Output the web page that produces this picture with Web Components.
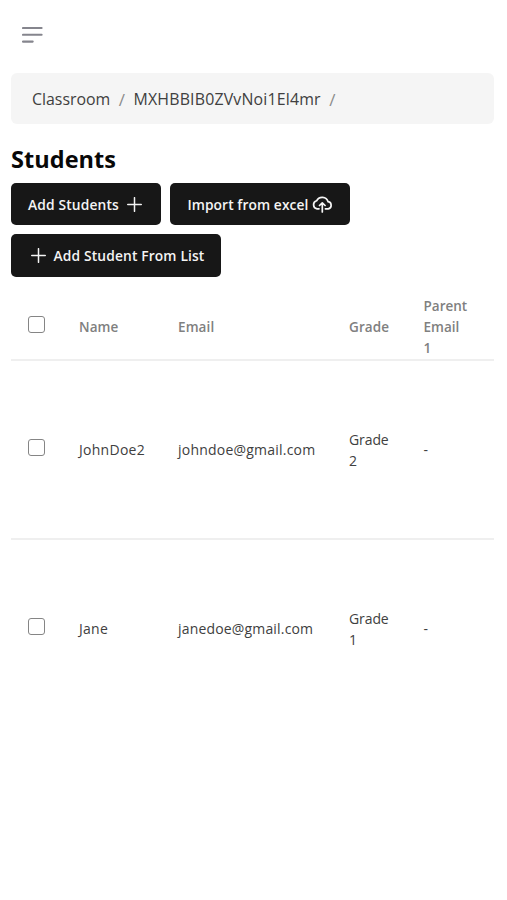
<!DOCTYPE html>
<html lang="en">
<head>
<meta charset="utf-8">
<title>Students</title>
<style>
  html, body { margin: 0; background: #fff; }
  body { font-family: "Open Sans", "Noto Sans", sans-serif; }
</style>
</head>
<body>
<students-page></students-page>
<script>
const define = (name, html) => {
  const template = document.createElement('template');
  template.innerHTML = html;
  customElements.define(name, class extends HTMLElement {
    constructor() {
      super();
      this.attachShadow({ mode: 'open' }).append(template.content.cloneNode(true));
    }
  });
};

define('menu-button', `
  <style>
    :host { display: block; height: 73px; box-sizing: border-box; padding: 26px 0 0 22px; }
    svg { display: block; }
  </style>
  <svg width="21" height="18" viewBox="0 0 21 18" fill="none" stroke="#85858d" stroke-width="2.1" stroke-linecap="round">
    <path d="M1 2H19.6M1 8.8H19.6M1 15.6H10.7"/>
  </svg>`);

define('bread-crumbs', `
  <style>
    :host { display: flex; align-items: center; box-sizing: border-box; height: 51px; margin: 0 13px 0 11px;
      padding: 1px 21px 0; gap: 8.1px; background: #f5f5f5; border-radius: 6px; color: #404040; font-size: 15.9px; white-space: nowrap; }
  </style>
  <slot></slot>`);

define('crumb-item', `
  <style>:host { display: block; letter-spacing: var(--track, 0); }</style>
  <slot></slot>`);

define('crumb-divider', `
  <style>:host { display: block; width: 7px; color: #8c8c8c; font-size: 17px; text-align: center; }</style>
  <span>/</span>`);

define('page-title', `
  <style>
    :host { display: block; margin: 18px 0 0 11px; height: 37px; line-height: 34px; font-size: 23.5px; font-weight: 700;
      color: #080808; letter-spacing: var(--track, .05px); white-space: nowrap; }
  </style>
  <slot></slot>`);

define('button-group', `
  <style>:host { display: flex; flex-wrap: wrap; gap: 9px; margin: 4px 100px 0 11px; }</style>
  <slot></slot>`);

define('action-button', `
  <style>
    :host { display: flex; align-items: center; box-sizing: border-box; width: var(--w); height: 42.3px; padding: 0 17px;
      border-radius: 5px; background: #171717; color: #f4f4f4; font-size: 13.8px; font-weight: 600;
      white-space: nowrap; letter-spacing: var(--track, .14px); }
    .text { width: var(--tw); }
  </style>
  <slot name="before"></slot><span class="text"><slot></slot></span><slot name="after"></slot>`);

define('plus-icon', `
  <style>:host { display: block; } svg { display: block; }</style>
  <svg width="15" height="15" viewBox="0 0 15 15" fill="none" stroke="#f4f4f4" stroke-width="1.5" stroke-linecap="round">
    <path d="M7.5 .7V14.3M.7 7.5H14.3"/>
  </svg>`);

define('cloud-icon', `
  <style>:host { display: block; } svg { display: block; }</style>
  <svg width="21" height="17" viewBox="0 0 21 17" fill="none" stroke="#f4f4f4" stroke-width="1.7" stroke-linecap="round" stroke-linejoin="round">
    <path d="M7 12.8H5A4.1 4.1 0 0 1 4.6 4.8A6.2 6.2 0 0 1 16.1 5.7A3.6 3.6 0 0 1 16.2 12.8H13.4"/>
    <path d="M10.3 15.9V7M7.5 9.5L10.3 6.8L13.1 9.5"/>
  </svg>`);

define('data-table', `
  <style>:host { display: block; margin: 12.9px 13px 0 11px; font-size: 14px; line-height: 21px; }</style>
  <slot></slot>`);

define('table-row', `
  <style>
    :host { display: grid; grid-template-columns: 68px 99px 171px 74.5px 1fr; align-items: center; box-sizing: border-box;
      height: var(--h, 179px); color: #404040; border-bottom: 2px solid var(--line, #efefef); }
    :host([head]) { --h: 72px; --box-gap: 5.5px; padding-top: 6px; color: #808080; font-size: 13.5px; font-weight: 600; }
    :host([last]) { --line: transparent; }
  </style>
  <slot></slot>`);

define('table-cell', `
  <style>:host { display: block; letter-spacing: var(--track, .1px); }</style>
  <slot></slot>`);

define('check-box', `
  <style>
    :host { display: block; padding: 0 0 var(--box-gap, 5px) 17px; }
    i { display: block; box-sizing: border-box; width: 17px; height: 17px; border: 1.2px solid #858585; border-radius: 3px; background: #fff; }
  </style>
  <i></i>`);

define('students-page', `
  <style>:host { display: block; width: 507px; height: 900px; overflow: hidden; background: #fff; }</style>
  <menu-button></menu-button>
  <bread-crumbs>
    <crumb-item style="--track:0">Classroom</crumb-item><crumb-divider></crumb-divider>
    <crumb-item style="--track:.17px">MXHBBIB0ZVvNoi1El4mr</crumb-item><crumb-divider></crumb-divider>
  </bread-crumbs>
  <page-title>Students</page-title>
  <button-group>
    <action-button style="--w:150.4px;--tw:98.5px">Add Students<plus-icon slot="after"></plus-icon></action-button>
    <action-button style="--w:180px;--tw:126px;--track:.08px">Import from excel<cloud-icon slot="after"></cloud-icon></action-button>
    <action-button style="--w:210px"><plus-icon slot="before" style="margin:0 7.5px 0 3px"></plus-icon>Add Student From List</action-button>
  </button-group>
  <data-table>
    <table-row head><check-box></check-box><table-cell>Name</table-cell><table-cell>Email</table-cell><table-cell>Grade</table-cell><table-cell style="--track:0">Parent<br>Email<br>1</table-cell></table-row>
    <table-row><check-box></check-box><table-cell style="--track:.28px">JohnDoe2</table-cell><table-cell style="--track:.22px">johndoe@gmail.com</table-cell><table-cell style="--track:-.1px">Grade<br>2</table-cell><table-cell>-</table-cell></table-row>
    <table-row last><check-box></check-box><table-cell style="--track:.25px">Jane</table-cell><table-cell style="--track:.17px">janedoe@gmail.com</table-cell><table-cell style="--track:-.1px">Grade<br>1</table-cell><table-cell>-</table-cell></table-row>
  </data-table>`);
</script>
</body>
</html>
